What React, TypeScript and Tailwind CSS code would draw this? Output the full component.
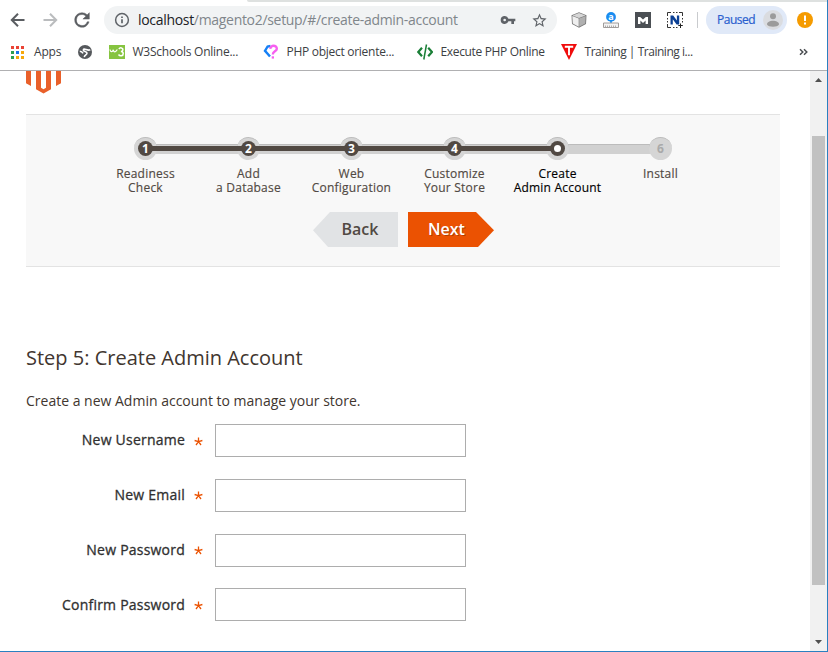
import React from 'react';

const OPEN = "font-['Open_Sans','Noto_Sans',sans-serif]";

function BackArrow({ className }: { className: string }) {
  return (
    <svg width="16" height="16" viewBox="0 0 16 16" className={className} fill="none" stroke="currentColor" strokeWidth="2">
      <path d="M14.5 8H2M8 1.8 1.8 8 8 14.2" />
    </svg>
  );
}

function Reload() {
  return (
    <svg width="22" height="22" viewBox="0 0 24 24" fill="#5a5d61" className="m-px">
      <path d="M17.65 6.35A7.96 7.96 0 0 0 12 4a8 8 0 1 0 7.73 10h-2.08A6 6 0 1 1 12 6c1.66 0 3.14.69 4.22 1.78L13 11h7V4z" stroke="#5a5d61" strokeWidth=".5" />
    </svg>
  );
}

function AddressBar() {
  return (
    <div className="flex h-7 w-[453px] items-center rounded-full bg-[#f1f3f4] pl-[10px] pr-[9px]">
      <svg width="16" height="16" viewBox="0 0 16 16" fill="none" stroke="#5f6368" strokeWidth="1.5">
        <circle cx="8" cy="8" r="6.4" />
        <path d="M8 7.2v4M8 4.4v1.7" strokeWidth="1.7" />
      </svg>
      <div className="ml-2 whitespace-nowrap text-[14px] leading-5 tracking-[-0.31px] text-[#80868b]">
        <span className="text-[#202124]">localhost</span>/magento2/setup/#/create-admin-account
      </div>
      <svg width="16" height="16" viewBox="0 0 24 24" fill="#5f6368" className="ml-auto">
        <path d="M12.65 10A6 6 0 0 0 1 12a6 6 0 0 0 11.65 2H17v4h4v-4h2v-4H12.65zM7 14a2 2 0 1 1 0-4 2 2 0 0 1 0 4z" />
      </svg>
      <svg width="17" height="17" viewBox="0 0 24 24" fill="#5f6368" className="ml-[15px]">
        <path d="m22 9.24-7.19-.62L12 2 9.19 8.63 2 9.24l5.46 4.73L5.82 21 12 17.27 18.18 21l-1.63-7.03L22 9.24zM12 15.4l-3.76 2.27 1-4.28-3.32-2.88 4.38-.38L12 6.1l1.71 4.04 4.38.38-3.32 2.88 1 4.28L12 15.4z" />
      </svg>
    </div>
  );
}

function Extensions() {
  return (
    <div className="ml-[14px] flex items-center gap-4">
      <svg width="16" height="16" viewBox="0 0 16 16">
        <path d="M8 .3 15.500 3.200 15 12 8 15.700 1 12 .5 3.200z" fill="#777" />
        <path d="M8 1 14.500 3.500 8 6 1.500 3.500z" fill="#d6d6d6" />
        <path d="M1.300 4.100 7.700 6.600v8.200L1.800 11.600z" fill="#efefef" />
        <path d="M8.200 6.600 14.700 4.100l-.5 7.500-6 3.200z" fill="#b0b0b0" />
      </svg>
      <svg width="16" height="16" viewBox="0 0 16 16">
        <circle cx="8" cy="4.900" r="4.900" fill="#1a8cf0" />
        <text x="8" y="7.800" textAnchor="middle" fontSize="9" fontWeight="700" fill="#fff" fontFamily="Open Sans">a</text>
        <path d="M7.200 9h1.600v2H7.200z" fill="#1a8cf0" />
        <path d="M.5 11h15v4.500H.5z" fill="#f3f3f3" stroke="#a09c9a" />
        <path d="M2.500 13.500v2M4.500 13.500v2M6.500 13.500v2M8.500 13.500v2M10.500 13.500v2M12.500 13.500v2" stroke="#a09c9a" strokeWidth=".8" />
      </svg>
      <svg width="16" height="16" viewBox="0 0 16 16">
        <path d="M0 0h16v16H0z" fill="#4b4f54" />
        <path d="M3 12V5h2.200L8 7.600 10.800 5H13v7h-2.400V8.600L8 10.900 5.400 8.600V12z" fill="#fff" />
      </svg>
      <svg width="16" height="16" viewBox="0 0 16 16" fill="none">
        <path d="M.5 4V.5H4M12 .5h3.500V4M.5 12v3.500H4M6 .5h1.500M9 .5h1.500M.5 6v1.500M.5 9v1.500M15.500 6v1.500M15.500 9v1.500M6 15.500h1.500M9 15.500h1.500" stroke="#333" />
        <path d="M3.500 12.500v-9h2.700l3.700 5v-5h2.300v9H9.600l-3.800-5.200v5.200z" fill="#0a3f94" />
        <path d="M13.500 11.500v4.500M11.300 13.500h4.500" stroke="#222" />
      </svg>
    </div>
  );
}

function Toolbar() {
  return (
    <div className="flex h-[34px] items-center pl-[10px] pt-[2px]">
      <BackArrow className="text-[#5a5d61]" />
      <BackArrow className="ml-4 rotate-180 text-[#babcbe]" />
      <div className="ml-3"><Reload /></div>
      <div className="ml-[10px]"><AddressBar /></div>
      <Extensions />
      <div className="ml-[14px] h-4 w-px bg-[#c9cbce]" />
      <div className="ml-2 flex h-7 w-[81px] items-center rounded-full bg-[#e0e9f8] pl-[11px] pr-1">
        <span className="text-[12px] tracking-[-0.5px] text-[#2a5fcf] [-webkit-text-stroke:0.2px]">Paused</span>
        <svg width="20" height="20" viewBox="0 0 20 20" className="ml-auto">
          <circle cx="10" cy="10" r="10" fill="#dadce0" />
          <circle cx="10" cy="6.300" r="3" fill="#9b9b9b" />
          <path d="M4 14.400c0-5 12-5 12 0-1.500 3-10.500 3-12 0z" fill="#9b9b9b" />
        </svg>
      </div>
      <svg width="16" height="16" viewBox="0 0 16 16" className="ml-[10px]">
        <circle cx="8" cy="8" r="8" fill="#f59b00" />
        <path d="M7 3.500h2v5.500H7zM7 10.600h2v2H7z" fill="#fff" />
      </svg>
    </div>
  );
}

const appDots = ['#ea4335', '#ea4335', '#ea4335', '#2f9e50', '#1a73e8', '#f6a80c', '#2f9e50', '#f6a80c', '#f6a80c'];

function Bookmarks() {
  return (
    <div className="flex h-[34px] items-center whitespace-nowrap pb-[2px] pl-[11px] text-[12px] text-[#3c4043]">
      <div className="grid grid-cols-3 gap-[2px]">
        {appDots.map((c, i) => (
          <span key={i} className="size-[3px]" style={{ background: c }} />
        ))}
      </div>
      <span className="ml-[10px] w-[27px] tracking-[-0.2px]">Apps</span>
      <svg width="14" height="14" viewBox="0 0 14 14" className="ml-[17px]">
        <circle cx="7" cy="7" r="7" fill="#55585c" />
        <path d="M12.200 4.600C10 6.600 6 2.600 5.300 4.900c-.5 2.100 3.600 1.100 3.700 3.200.1 1.900-2.500 1.600-2.700 4" stroke="#fff" strokeWidth="1.600" fill="none" />
        <path d="M1.800 6.200c1.500.1 2.500.8 3.300 2.200" stroke="#fff" strokeWidth="1.600" fill="none" />
      </svg>
      <svg width="16" height="14" viewBox="0 0 16 14" className="ml-[17px]">
        <path d="M0 0h16v14H0z" fill="#86c440" />
        <path d="M1 4.500c.3 2.800 2.400 3 3.300.3.500 2.800 2.600 2.600 4-.2" fill="none" stroke="#fff" strokeWidth="1.200" />
        <path d="M9.900 4c1.200-2 4.300-1.200 4 .8-.2 1.200-1 1.600-2 1.700 3 .1 3 3.700.5 4.300-1.200.2-2.200-.3-2.900-1.300" fill="none" stroke="#fff" strokeWidth="1.500" />
      </svg>
      <span className="ml-[7.500px] w-[106.500px] tracking-[-0.24px]">W3Schools Online...</span>
      <svg width="16" height="16" viewBox="0 0 16 16" className="ml-6" fill="none" strokeWidth="2.400">
        <path d="M7.500 2 4.600 2.500 2 6.800 7 12.500" stroke="#1680f5" />
        <path d="M7.500 4.800C7 .8 14 .8 13.800 4.800 13.600 7.500 9.800 7.200 9.800 10.500" stroke="#f65ff0" />
        <path d="M8.700 12.300H11v2.300H8.700z" fill="#f65ff0" />
      </svg>
      <span className="ml-[7.500px] w-[108.500px] tracking-[-0.28px]">PHP object oriente...</span>
      <svg width="16" height="16" viewBox="0 0 16 16" className="ml-[22px]" fill="none" stroke="#1a7f37">
        <path d="M5 3.800 1.300 8 5 12.200M11.200 3.800 15 8l-3.800 4.200" strokeWidth="2.200" />
        <path d="M9.500.5 6.800 15.500" strokeWidth="1.500" />
      </svg>
      <span className="ml-[7.500px] w-[104.500px] tracking-[-0.34px]">Execute PHP Online</span>
      <svg width="16" height="16" viewBox="0 0 16 16" className="ml-4">
        <path d="M0 0h16L8 16z" fill="#f00c0c" />
        <path d="M3.800 2.800h8.400M8 2.800v8.400" stroke="#fff" strokeWidth="1.900" />
      </svg>
      <span className="ml-[7.500px] w-[108.500px] tracking-[-0.47px]">Training | Training i...</span>
      <svg width="9" height="8" viewBox="0 0 9 8" className="ml-auto mr-[19px]" fill="none" stroke="#4a4d51" strokeWidth="1.500">
        <path d="m1 1.200 2.800 2.800L1 6.800M5 1.200 7.800 4 5 6.800" />
      </svg>
    </div>
  );
}

const steps: { label: string; state: 'done' | 'current' | 'todo' }[] = [
  { label: 'Readiness\nCheck', state: 'done' },
  { label: 'Add\na Database', state: 'done' },
  { label: 'Web\nConfiguration', state: 'done' },
  { label: 'Customize\nYour Store', state: 'done' },
  { label: 'Create\nAdmin Account', state: 'current' },
  { label: 'Install', state: 'todo' },
];

function Step({ index }: { index: number }) {
  const { label, state } = steps[index];
  const last = index === steps.length - 1;
  return (
    <li className="relative flex w-[103px] flex-col items-center">
      {!last && (
        <span className="absolute left-1/2 top-[7px] h-[10px] w-full border-t border-[#bcbcbc] bg-[#d1d1d1]" />
      )}
      <span className="relative size-[23px] rounded-full border-t border-[#bdbdbd] bg-[#d5d5d5]" />
      {state === 'done' && <span className="absolute left-1/2 top-[9px] z-10 h-[5px] w-full bg-[#514943]" />}
      <span
        className={
          'absolute top-1 z-20 flex size-[15px] items-center justify-center rounded-full text-[12px] font-bold leading-[15px] ' +
          (state === 'todo' ? 'text-[#a9a9a9]' : 'bg-[#514943] text-white')
        }
      >
        {state === 'current' ? <span className="size-[7px] rounded-full bg-white" /> : index + 1}
      </span>
      <span
        className={
          'mt-[7px] whitespace-pre text-center text-[12px] leading-[14px] tracking-[0.22px] [-webkit-text-stroke:0.15px] ' +
          (state === 'current' ? 'text-black' : 'text-[#514943]')
        }
      >
        {label}
      </span>
    </li>
  );
}

function Field({ label }: { label: string }) {
  return (
    <div className="flex h-[33px] items-center">
      <label className="w-[159px] pb-[1.500px] text-right text-[14px] tracking-[0.22px] text-[#303030] [-webkit-text-stroke:0.3px]">{label}</label>
      <svg width="9" height="9" viewBox="0 0 9 9" className="ml-[9px] mt-px" stroke="#eb5202" strokeWidth="1.300">
        <path d="M4.500 4.600V.6M4.500 4.600.6 3.500M4.500 4.600l3.900-1.100M4.500 4.600 2 8M4.500 4.600 7 8" />
      </svg>
      <input className="ml-3 h-full w-[251px] border border-[#adadad] bg-white" />
    </div>
  );
}

export default function App() {
  return (
    <div className={`flex h-[652px] w-[828px] flex-col border-b border-r border-[#2b80c0] bg-white ${OPEN}`}>
      <div className="flex h-[2px] justify-end"><div className="w-[580px] rounded-bl bg-[#dee1e0]" /></div>
      <Toolbar />
      <Bookmarks />
      <div className="h-px bg-[#b0b0b2]" />
      <div className="flex min-h-0 flex-1">
        <main className="flex-1 pl-[26px]">
          <svg width="36" height="23" viewBox="0 0 36 23" fill="#e9602a" className="block">
            <path d="M0 0h5v15L0 12.300zM10 0h5v16.800l2.500 1.400 2.500-1.400V0h5v18.300L17.500 22.600 10 18.300zM30 0h5v12.300l-5 2.700z" />
          </svg>
          <section className="mt-[20px] h-[153px] w-[754px] border-y border-[#e3e3e3] bg-[#f8f8f8] pt-[22px]">
            <ol className="flex pl-[68px]">
              {steps.map((_, i) => (
                <Step key={i} index={i} />
              ))}
            </ol>
            <div className="mt-[17px] flex gap-[10px] pl-[287px] text-[16px]">
              <button className="h-[35px] w-[85px] bg-[#e1e3e5] pb-[2px] pl-[9px] font-semibold text-[#514943] [clip-path:polygon(17px_0,100%_0,100%_100%,15px_100%,0_52%)]">Back</button>
              <button className="h-[35px] w-[86px] bg-[#eb5202] pb-[2px] pr-[9px] font-semibold text-white [clip-path:polygon(0_0,68px_0,100%_52%,70px_100%,0_100%)] [text-shadow:1px_1px_0_rgba(0,0,0,0.25)]">Next</button>
            </div>
          </section>
          <h1 className="mt-[77px] text-[20px] leading-7 text-[#41362f]">Step 5: Create Admin Account</h1>
          <p className="mt-[19px] text-[14px] leading-5 text-[#41362f]">Create a new Admin account to manage your store.</p>
          <form className="mt-[13px] flex flex-col gap-[21.800px]">
            <Field label="New Username" />
            <Field label="New Email" />
            <Field label="New Password" />
            <Field label="Confirm Password" />
          </form>
        </main>
        <aside className="flex w-[17px] flex-col items-center bg-[#f1f1f1]">
          <svg width="7" height="4" viewBox="0 0 7 4" fill="#505050" className="mt-[7px]"><path d="M0 4 3.500 0 7 4z" /></svg>
          <div className="mt-[54px] h-[449px] w-[13px] bg-[#c1c1c1]" />
          <svg width="7" height="4" viewBox="0 0 7 4" fill="#505050" className="mb-[7px] mt-auto"><path d="M0 0h7L3.500 4z" /></svg>
        </aside>
      </div>
    </div>
  );
}
